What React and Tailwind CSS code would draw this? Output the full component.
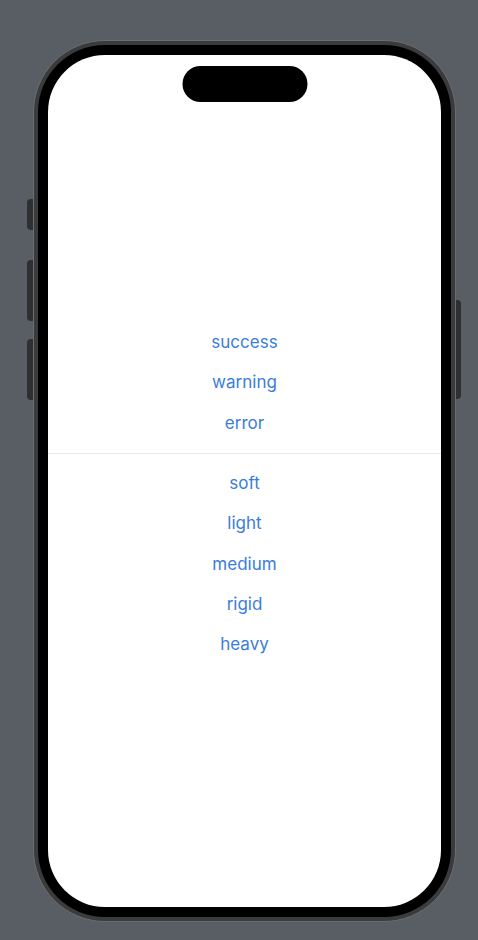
const TOP = ['success', 'warning', 'error']
const BOTTOM = ['soft', 'light', 'medium', 'rigid', 'heavy']

function Row({ label }) {
  return (
    <button className="h-[40.3px] w-full flex items-center justify-center text-[17px] text-[#3a7ddc] leading-none">
      {label}
    </button>
  )
}

export default function App() {
  return (
    <div className="w-[478px] h-[940px] bg-[#595d64] flex pl-[33px] pt-[40px] font-['Inter','Liberation_Sans',sans-serif]">
      <div className="relative">
        {/* side buttons */}
        <div className="absolute left-[-6px] top-[159px] w-[6px] h-[31px] bg-[#2e2f31] rounded-l-sm" />
        <div className="absolute left-[-6px] top-[220px] w-[6px] h-[61px] bg-[#2e2f31] rounded-l-sm" />
        <div className="absolute left-[-6px] top-[299px] w-[6px] h-[61px] bg-[#2e2f31] rounded-l-sm" />
        <div className="absolute right-[-5px] top-[260px] w-[5px] h-[99px] bg-[#2e2f31] rounded-r-sm" />

        {/* frame */}
        <div className="w-[423px] h-[882px] rounded-[72px] bg-[#3a3b3d] border border-[#6b6d70] p-[4px]">
          <div className="w-full h-full rounded-[67px] bg-black p-[10px]">
            <div className="relative w-full h-full rounded-[57px] bg-white flex flex-col items-center pt-[267.5px]">
              <div className="absolute top-[11px] left-1/2 -translate-x-1/2 w-[125px] h-[36px] rounded-full bg-black" />
              {TOP.map(t => <Row key={t} label={t} />)}
              <div className="w-full pt-[10px] pb-[9px]">
                <div className="w-full h-px bg-[#ebebeb]" />
              </div>
              {BOTTOM.map(t => <Row key={t} label={t} />)}
            </div>
          </div>
        </div>
      </div>
    </div>
  )
}
